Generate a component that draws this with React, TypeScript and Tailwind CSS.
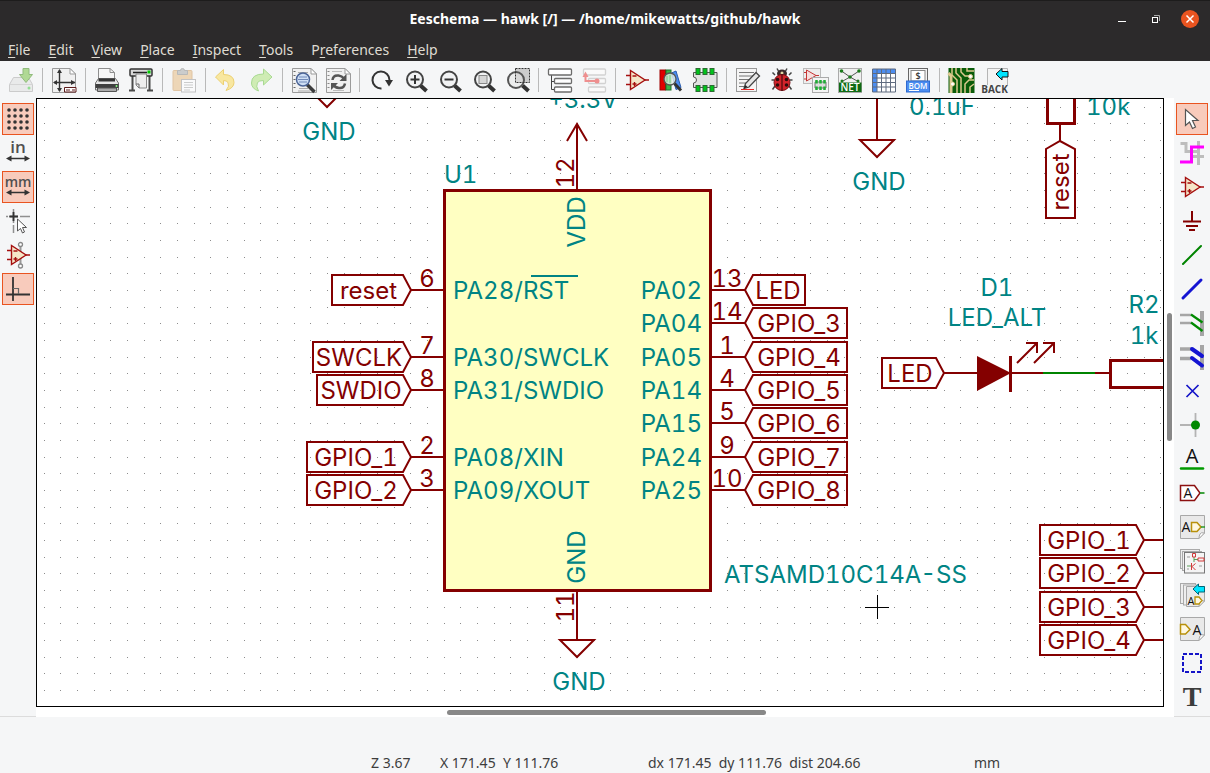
import type { ReactNode } from "react";

const MAROON = "#840000";
const TEAL = "#008484";

/* ---------- small icon building blocks ---------- */

const Page = ({ x = 0, y = 0, w = 24, h = 24, fold = 6 }: { x?: number; y?: number; w?: number; h?: number; fold?: number }) => (
  <g>
    <path
      d={`M${x + 0.5} ${y + 0.5}H${x + w - fold}L${x + w - 0.5} ${y + fold}V${y + h - 0.5}H${x + 0.5}Z`}
      fill="#f1f1f1"
      stroke="#9b9b9b"
    />
    <path d={`M${x + w - fold} ${y + 0.5}V${y + fold}H${x + w - 0.5}Z`} fill="#fff" stroke="#9b9b9b" />
  </g>
);

const CurledPage = ({ x = 0, y = 0, w = 25, h = 24 }: { x?: number; y?: number; w?: number; h?: number }) => (
  <g>
    <path
      d={`M${x + 0.5} ${y + 0.5}H${x + w - 0.5}V${y + h - 6}L${x + w - 6} ${y + h - 0.5}H${x + 0.5}Z`}
      fill="#e9e9e9"
      stroke="#a8a8a8"
    />
    <path d={`M${x + w - 0.5} ${y + h - 6}Q${x + w - 4} ${y + h - 7} ${x + w - 5} ${y + h - 5}T${x + w - 6} ${y + h - 0.5}Z`} fill="#fff" stroke="#a8a8a8" />
  </g>
);

const Magnifier = ({ children }: { children?: ReactNode }) => (
  <g transform="translate(2 1)">
    <path d="M15.5 16.5L21.5 22" stroke="#333" strokeWidth="4" />
    <circle cx="10" cy="10.5" r="8" fill="#f1f2f3" stroke="#444" strokeWidth="2" />
    {children}
  </g>
);

const OpAmp = () => (
  <g stroke="#a50f0f" strokeWidth="1.4">
    <path d="M1 7.5H6M1 16.5H6M19 12H24" />
    <path d="M5.5 2.5V21.5L20 12Z" fill="#f5e6c8" />
    <path d="M7.5 8H11.5M7.5 16H11.5M9.5 14V18" />
  </g>
);

const Chip = () => (
  <g>
    <path d="M0.5 4.5H24V19.5H0.5V15A3 3 0 0 0 0.5 9Z" fill="#e2e2e2" stroke="#555" />
    {[3, 10, 17].map((x) => (
      <g key={x} fill="#00c41a" stroke="#2d6b33">
        <rect x={x} y="0.5" width="4" height="6" />
        <rect x={x} y="17.5" width="4" height="6" />
      </g>
    ))}
  </g>
);

const iconText = { fontFamily: '"Open Sans", "Noto Sans", sans-serif' };

const icons: Record<string, ReactNode> = {
  save: (
    <g opacity="0.65">
      <path d="M4.5 9.5H19.5L23.5 16.5V23.5H0.5V16.5Z" fill="#e4e4e4" stroke="#b5b5b5" />
      <path d="M1 16.5H23" stroke="#c4c4c4" />
      <circle cx="20" cy="20" r="1.5" fill="#5fd35f" />
      <path d="M14 0.5H20V6.5H23.5L17 14.5L10.5 6.5H14Z" fill="#8ccb60" stroke="#5c9c3c" />
    </g>
  ),
  page: (
    <g>
      <Page h={25} />
      <path d="M7.5 2V23M2 14.5H23" stroke="#333" strokeWidth="1.4" />
      <path d="M5 5L7.5 1L10 5ZM5 20L7.5 24L10 20ZM5 12L1 14.5L5 17ZM19 12L23.5 14.5L19 17Z" fill="#333" />
      <path d="M12.5 19.5H24V24H12.5Z" fill="#fff" stroke="#5c1a1a" />
      <path d="M14 22H18M20 22H23" stroke="#5c1a1a" />
    </g>
  ),
  print: (
    <g>
      <path d="M3.5 13V0.5H15L19.5 4.5V13Z" fill="#f6f6f6" stroke="#8e8e8e" />
      <path d="M15 0.5V4.5H19.5" fill="none" stroke="#8e8e8e" />
      <path d="M3.5 10.5H20.5L23.5 15V22H0.5V15Z" fill="#e6e6e6" stroke="#707070" />
      <path d="M3.5 10.5H20V13.5H3.5Z" fill="#333" />
      <path d="M0.5 16H23.5V20H0.5Z" fill="#3f3f3f" />
      <path d="M2.5 20H21.5V23.5H2.5Z" fill="#aaa" stroke="#555" />
      <circle cx="21.5" cy="18" r="1" fill="#8f8" />
    </g>
  ),
  plot: (
    <g>
      <path d="M3.5 7V22M20.5 7V22M0 22.5H6M18 22.5H24" stroke="#4a4a4a" strokeWidth="2" />
      <rect x="1" y="1" width="22" height="7" rx="1" fill="#d8d8d8" stroke="#333" strokeWidth="1.5" />
      <path d="M4 4.5H18" stroke="#222" strokeWidth="1.5" />
      <rect x="18.5" y="2.5" width="3" height="3" fill="#0c0" />
      <path d="M7 6V17L10 20H17.5V6Z" fill="#ededed" stroke="#888" />
      <path d="M7 16H10V20" fill="none" stroke="#666" />
    </g>
  ),
  paste: (
    <g opacity="0.55">
      <rect x="1" y="2.5" width="19" height="20" rx="1" fill="#e8bd84" stroke="#cf9d60" />
      <path d="M5.5 6.5V2.5H8.5Q8.5 0.5 10.5 0.5T12.5 2.5H15.5V6.5Z" fill="#aaa" stroke="#888" />
      <rect x="9.5" y="11.5" width="14" height="12.5" fill="#fff" stroke="#999" />
      <path d="M12 14.5H21M12 17H21M12 19.5H21M12 22H18" stroke="#aaa" />
    </g>
  ),
  undo: (
    <path
      d="M8.5 1.5V6.5Q19 6.5 19 14.5Q19 20 11 22.5Q15 18 13 14.5Q11.5 12.5 8.5 12.5V17L0.5 9Z"
      fill="#f8e7a0"
      stroke="#ecd071"
    />
  ),
  redo: (
    <path
      d="M14.5 1V6Q2.5 6 2.5 15Q2.5 20.5 9.5 23Q6.5 18 8.5 14.5Q10 12.5 14.5 12.5V17L23 9Z"
      fill="#cfecb4"
      stroke="#a8da92"
    />
  ),
  find: (
    <g>
      <Page w={25} h={25} />
      <path d="M2.5 3V23" stroke="#666" strokeDasharray="1 3" strokeWidth="2" />
      <path d="M6 4.5H16M7 20.5H16M6 23H18" stroke="#aaa" />
      <path d="M15 16.5L22.5 24" stroke="#3c3c3c" strokeWidth="3.5" />
      <circle cx="11" cy="11.5" r="6.5" fill="#cfdff5" stroke="#4b6497" strokeWidth="1.5" />
      <path d="M7 9H15M6 11.5H16M7 14H15" stroke="#7189b8" />
    </g>
  ),
  replace: (
    <g>
      <Page w={25} h={25} />
      <path d="M2.5 3V23" stroke="#888" strokeDasharray="1 3" strokeWidth="2" />
      <path d="M6 3.5H16M7 22.5H18" stroke="#bbb" />
      <path d="M6.5 12Q7 7 12.5 7.5Q16 8 18 10.5M19 15.5Q18 20.5 13 20Q9 19.5 7.5 17" fill="none" stroke="#555" strokeWidth="2.5" />
      <path d="M20.5 6V13H13.5ZM5 22V15H12Z" fill="#555" />
    </g>
  ),
  refresh: (
    <g>
      <path d="M12.5 20.5A8.5 8.5 0 1 1 20.5 12" fill="none" stroke="#333" strokeWidth="2" />
      <path d="M16 12H24L20 18.5Z" fill="#333" />
    </g>
  ),
  zoomIn: (
    <Magnifier>
      <path d="M5.5 10.5H14.5M10 6V15" stroke="#333" strokeWidth="2" />
    </Magnifier>
  ),
  zoomOut: (
    <Magnifier>
      <path d="M5.5 10.5H14.5" stroke="#333" strokeWidth="2" />
    </Magnifier>
  ),
  zoomFit: (
    <Magnifier>
      <rect x="6" y="6.5" width="8" height="8" fill="#d6d6d6" stroke="#888" />
    </Magnifier>
  ),
  zoomArea: (
    <g transform="translate(2 0)">
      <rect x="8.5" y="0.5" width="14" height="14" fill="#ccc" />
      <path d="M15.5 17.5L21.5 23" stroke="#333" strokeWidth="4" />
      <circle cx="9" cy="12" r="8" fill="#e4e4e4" fillOpacity="0.5" stroke="#555" strokeWidth="2" />
      <rect x="8.5" y="0.5" width="14" height="14" fill="none" stroke="#333" strokeDasharray="2 1" />
    </g>
  ),
  hierarchy: (
    <g>
      <path d="M3.5 6V21.5H7M3.5 13.5H7" fill="none" stroke="#444" />
      <g fill="#fff" stroke="#6c6c6c" strokeWidth="1.3">
        <rect x="0.5" y="1" width="23" height="6" rx="1" />
        <rect x="6.5" y="10.5" width="17" height="5" rx="1" />
        <rect x="6.5" y="19" width="17" height="5" rx="1" />
      </g>
    </g>
  ),
  leaveSheet: (
    <g>
      <g fill="#fafafa" stroke="#d2d2d2" strokeWidth="1.3">
        <rect x="1.5" y="1" width="22" height="6" rx="1" />
        <rect x="6.5" y="10.5" width="17" height="5" rx="1" />
        <rect x="6.5" y="19" width="17" height="5" rx="1" />
      </g>
      <path d="M15 13H3.5V8" fill="none" stroke="#ee8f8f" strokeWidth="2" />
      <circle cx="15" cy="13" r="2.5" fill="#ee8f8f" />
      <path d="M0.5 9L3.5 3.5L6.5 9Z" fill="#ee8f8f" />
    </g>
  ),
  opamp: <OpAmp />,
  library: (
    <g>
      <rect x="1" y="2" width="5.5" height="20" fill="#e00000" stroke="#9f0000" />
      <rect x="7" y="2" width="5" height="20" fill="#39b54a" stroke="#20702c" />
      <path d="M12.5 5L17 3L22 19.5L17 21.5Z" fill="#4c8df0" stroke="#2a5cae" />
      <path d="M15.5 15.5L22 22.5" stroke="#333" strokeWidth="3" />
      <circle cx="11" cy="11" r="6" fill="#e4f0e8" fillOpacity="0.8" stroke="#555" strokeWidth="1.3" />
      <path d="M8 8V14M11 7V15" stroke="#8fd39a" strokeWidth="1.5" />
    </g>
  ),
  footprint: <Chip />,
  annotate: (
    <g>
      <rect x="0.5" y="0.5" width="20" height="23" fill="#f5f5f5" stroke="#999" />
      <path d="M3 4.5H18M3 8H17M3 11.5H14M3 15H11M3 18.5H8" stroke="#777" />
      <path d="M20 4.5L23.5 8L13 19L8 20.5L9.5 15.5Z" fill="#e6e6e6" stroke="#444" strokeWidth="1.3" />
      <path d="M8 20.5L9.5 17L11.5 19Z" fill="#222" />
      <path d="M5 21.5H18" stroke="#e22" />
    </g>
  ),
  bug: (
    <g>
      <path d="M5 7L2.5 4.5M19 7L21.5 4.5M4 12H1.5M20 12H22.5M5 18L2.5 21.5M19 18L21.5 21.5M9 4L7 0.5M15 4L17 0.5" stroke="#444" strokeWidth="1.5" fill="none" />
      <ellipse cx="12" cy="5.5" rx="5" ry="4" fill="#3a2a2a" />
      <circle cx="12" cy="5" r="1.5" fill="#e5d7a4" />
      <ellipse cx="12" cy="14.5" rx="8" ry="8" fill="#d2232a" stroke="#7d1115" />
      <path d="M12 6V23" stroke="#4a0a0c" strokeWidth="1.2" />
      <g fill="#2e0d0d">
        <circle cx="7.5" cy="11.5" r="1.8" />
        <circle cx="16.5" cy="11.5" r="1.8" />
        <circle cx="7.5" cy="17" r="1.8" />
        <circle cx="16.5" cy="17" r="1.8" />
      </g>
    </g>
  ),
  assign: (
    <g>
      <rect x="-0.5" y="0.5" width="17" height="15" fill="#eee" stroke="#bbb" />
      <path d="M2.5 2V13L12 7.5ZM0 4.5H2.5M0 11H2.5M12 7.5H15" fill="#f7dede" stroke="#c43535" />
      <rect x="8.5" y="9.5" width="16" height="15" fill="#f4f4f4" stroke="#aaa" />
      <path d="M11 14H22V20H11Z" fill="#ddd" stroke="#777" />
      <path d="M12.5 12V15.5M16.5 12V15.5M20.5 12V15.5M12.5 18.5V22M16.5 18.5V22M20.5 18.5V22" stroke="#1fae35" strokeWidth="2.5" />
    </g>
  ),
  netlist: (
    <g>
      <rect x="0.5" y="0.5" width="23" height="24" fill="#f0f0f0" stroke="#aaa" />
      <path d="M3.5 3L12 9L21 3M4 13.5L12 9L20 13.5" stroke="#555" fill="none" />
      <g fill="#1b7a1b">
        <circle cx="3.5" cy="3" r="1.8" />
        <circle cx="21" cy="3" r="1.8" />
        <circle cx="12" cy="9" r="1.8" />
        <circle cx="4" cy="13" r="1.5" />
        <circle cx="20" cy="13" r="1.5" />
      </g>
      <rect x="1" y="14.5" width="22.5" height="9.5" fill="#0f6b14" />
      <text x="12" y="23" textAnchor="middle" fontSize="10" fontWeight="600" fill="#fff" style={iconText}>NET</text>
    </g>
  ),
  table: (
    <g>
      <rect x="0.5" y="1" width="23" height="23" fill="#fff" />
      <path d="M0.5 1H23.5V5.5H0.5ZM0.5 5.5H5V24H0.5Z" fill="#4c8df0" />
      <path d="M0.5 1H23.5V24H0.5ZM0.5 5.5H23.5M0.5 10H23.5M0.5 14.5H23.5M0.5 19H23.5M5 1V24M9.5 1V24M14 1V24M18.5 1V24" fill="none" stroke="#5f6b7f" />
    </g>
  ),
  bom: (
    <g>
      <rect x="2.5" y="0.5" width="19" height="13" fill="#f4f4f4" stroke="#666" />
      <rect x="5" y="2.5" width="14" height="10.5" fill="#fff" stroke="#888" />
      <text x="12" y="11" textAnchor="middle" fontSize="9" fontWeight="600" fill="#333" style={iconText}>$</text>
      <rect x="0.5" y="13" width="23" height="11" fill="#4c8df0" stroke="#2d6ad0" />
      <text x="12" y="21" textAnchor="middle" fontSize="8" fontWeight="600" fill="#fff" style={iconText}>BOM</text>
      <path d="M3 22.5H13" stroke="#fff" />
    </g>
  ),
  pcb: (
    <g>
      <rect x="-0.5" y="0" width="26" height="25" fill="#0a5c0a" />
      <path d="M3 0V7L8 12V25M7 0V5L12 10V25M12 0V4L16 8H21M16 25V16L20 12H25M21 25V19L25 16M18 0V3H25" stroke="#dcc98f" strokeWidth="1.5" fill="none" />
      <path d="M-0.5 5L2 8V25" stroke="#dcc98f" strokeWidth="3" fill="none" />
      <circle cx="3.5" cy="16" r="2" fill="#fff" stroke="#dcc98f" />
      <circle cx="21.5" cy="8.5" r="2" fill="#fff" stroke="#dcc98f" />
    </g>
  ),
  back: (
    <g>
      <path d="M4.5 17V0.5H24.5V17" fill="#f4f4f4" stroke="#b5b5b5" />
      <path d="M13 6L19 0.5V3.5H25V9H19V12Z" fill="#00e5ff" stroke="#111" />
      <text x="11.5" y="25" textAnchor="middle" fontSize="10" fontWeight="700" fill="#444" style={iconText}>BACK</text>
    </g>
  ),
  grid: (
    <g fill="#333">
      {[3, 9, 15, 21].map((x) => [3, 9, 15, 21].map((y) => <circle key={`${x}-${y}`} cx={x} cy={y} r="1.8" />))}
    </g>
  ),
  inches: (
    <g>
      <text x="12" y="12" textAnchor="middle" fontSize="17" fontWeight="600" fill="#505050" style={iconText}>in</text>
      <path d="M3 17.5H21" stroke="#333" strokeWidth="1.5" />
      <path d="M0 17.5L5.5 14.5V20.5ZM24 17.5L18.5 14.5V20.5Z" fill="#333" />
    </g>
  ),
  millimetres: (
    <g>
      <text x="12" y="12" textAnchor="middle" fontSize="14" fontWeight="600" fill="#505050" style={iconText}>mm</text>
      <path d="M3 17.5H21" stroke="#333" strokeWidth="1.5" />
      <path d="M0 17.5L5.5 14.5V20.5ZM24 17.5L18.5 14.5V20.5Z" fill="#333" />
    </g>
  ),
  cursorShape: (
    <g>
      <path d="M0 7.5H2M3 7.5H12M14 7.5H24M7.5 0V14M7.5 16V24" stroke="#8f8f8f" strokeWidth="1.5" />
      <path d="M3.5 7.5H12M7.5 3V12" stroke="#333" strokeWidth="1.8" />
      <path d="M11.5 10V22L14.5 19.5L16.5 24L18.5 23L16.5 18.5H20.5Z" fill="#fff" stroke="#555" />
    </g>
  ),
  hiddenPins: (
    <g>
      <path d="M14.5 3V21" stroke="#999" strokeWidth="2" />
      <OpAmp />
      <circle cx="14.5" cy="1.5" r="2" fill="#fff" stroke="#888" strokeWidth="1.3" />
      <circle cx="14.5" cy="23" r="2" fill="#fff" stroke="#888" strokeWidth="1.3" />
    </g>
  ),
  orthogonal: (
    <g stroke="#333" fill="none">
      <path d="M0 17.5H24M7 0V24" strokeWidth="1.8" />
      <path d="M7 11.5H12.5V17" strokeWidth="1.2" stroke="#666" />
    </g>
  ),
  arrow: <path d="M5.5 2.5V18.5L9.5 15L12.5 21.5L15.5 20L12.5 13.5H18Z" fill="#fff" stroke="#555" strokeWidth="1.2" />,
  highlightNet: (
    <g fill="none">
      <path d="M0.5 2.5H6V10.5H17M18.5 0V24M12 15.5H24" stroke="#bdbdbd" strokeWidth="3" />
      <path d="M0 21H11.5V6H24" stroke="#f0f" strokeWidth="3" />
    </g>
  ),
  power: <path d="M12 2V12M3 12.5H21M6 17H18M9 21H15" stroke="#840000" strokeWidth="2" />,
  wire: <path d="M3 21L21 3" stroke="#008400" strokeWidth="2" strokeLinecap="round" />,
  bus: <path d="M3 21L21 3" stroke="#1414d2" strokeWidth="3" strokeLinecap="round" />,
  wireEntry: (
    <g>
      <path d="M0 4H11M0 12H11" stroke="#a6a6a6" strokeWidth="2.5" />
      <path d="M22 0V25" stroke="#a6a6a6" strokeWidth="4" />
      <path d="M11 3.5L22.5 11.5M11 11.5L22.5 20" stroke="#008a00" strokeWidth="2.2" />
    </g>
  ),
  busEntry: (
    <g>
      <path d="M0 4H11M0 13.5H11" stroke="#a6a6a6" strokeWidth="3.5" />
      <path d="M22 0V25" stroke="#a6a6a6" strokeWidth="4" />
      <path d="M12 4L22 11M12 13L22 20.5" stroke="#1414d2" strokeWidth="4" strokeLinecap="round" />
    </g>
  ),
  noConnect: <path d="M6.5 6L18.5 18M18.5 6L6.5 18" stroke="#1414c8" strokeWidth="1.7" />,
  junction: (
    <g>
      <path d="M0 12H12M15.5 0V24" stroke="#b4b4b4" strokeWidth="1.8" />
      <circle cx="15.5" cy="12" r="4.5" fill="#008a00" />
    </g>
  ),
  netLabel: (
    <g>
      <text x="12" y="16" textAnchor="middle" fontSize="20" fill="#111" style={iconText}>A</text>
      <path d="M1 21.5H23" stroke="#009a00" strokeWidth="2.5" strokeLinecap="round" />
    </g>
  ),
  globalLabel: (
    <g>
      <path d="M0.5 4.5H14.5L20 12L14.5 19.5H0.5Z" fill="#fff" stroke="#8c1010" strokeWidth="1.5" />
      <path d="M20 12H24.5" stroke="#2a9a2a" strokeWidth="1.8" />
      <text x="8" y="17" textAnchor="middle" fontSize="14" fill="#111" style={iconText}>A</text>
    </g>
  ),
  hierLabel: (
    <g>
      <CurledPage />
      <text x="6" y="17" textAnchor="middle" fontSize="14" fill="#111" style={iconText}>A</text>
      <path d="M11.5 7.5H17L21 12L17 16.5H11.5Z" fill="#fff8e0" stroke="#b8900a" strokeWidth="1.5" />
      <path d="M21 12H25" stroke="#2a9a2a" strokeWidth="1.5" />
    </g>
  ),
  sheet: (
    <g>
      <rect x="0.5" y="0.5" width="19" height="19" fill="#eee" stroke="#aaa" />
      <rect x="2.5" y="2.5" width="19" height="19" fill="#eee" stroke="#aaa" />
      <rect x="4.5" y="3.5" width="20" height="20.5" fill="#f4f4f4" stroke="#777" />
      <path d="M14 8V13M14 10.5H18M7 17H11" stroke="#5aa15a" fill="none" />
      <path d="M12.5 4.5H15.5V8H12.5ZM18 9H24V12H18ZM11.5 14V21M12 17.5L15.5 14.5M12 17.5L15.5 21" stroke="#d33b3b" fill="none" />
      <path d="M7 8H10M7 20H9M19 17H22" stroke="#999" />
    </g>
  ),
  importPin: (
    <g>
      <rect x="0.5" y="0.5" width="15" height="20" fill="#eee" stroke="#aaa" />
      <rect x="3.5" y="2" width="15" height="20" fill="#eee" stroke="#aaa" />
      <CurledPage x={6} y={3} w={19} h={21} />
      <path d="M13 6L18.5 1V3.5H24.5V9H18.5V11.5Z" fill="#00e5ff" stroke="#067" />
      <text x="11" y="21.5" textAnchor="middle" fontSize="11" fill="#111" style={iconText}>A</text>
      <path d="M15 14H19L22 17.5L19 21H15Z" fill="#fff8e0" stroke="#b8900a" strokeWidth="1.3" />
    </g>
  ),
  sheetPin: (
    <g>
      <CurledPage />
      <path d="M0.5 7.5H5.5L10 12.5L5.5 17H0.5Z" fill="#fff8e0" stroke="#b8900a" strokeWidth="1.5" />
      <text x="17" y="17.5" textAnchor="middle" fontSize="14" fill="#111" style={iconText}>A</text>
    </g>
  ),
  graphicLines: <rect x="3" y="3" width="18" height="18" fill="none" stroke="#1414c8" strokeWidth="2" strokeDasharray="4 2" />,
  text: (
    <text x="12" y="21" textAnchor="middle" fontSize="28" fontWeight="700" fill="#3c3c3c" style={{ fontFamily: '"Liberation Serif", serif' }}>T</text>
  ),
};

const Icon = ({ name }: { name: string }) => (
  <svg viewBox="0 0 24 24" className="size-6 overflow-visible" aria-hidden="true">
    {icons[name]}
  </svg>
);

/* ---------- toolbars ---------- */

const topTools: [string, string][][] = [
  [["save", "Save"]],
  [["page", "Page settings"]],
  [["print", "Print"], ["plot", "Plot"]],
  [["paste", "Paste"]],
  [["undo", "Undo"], ["redo", "Redo"]],
  [["find", "Find"], ["replace", "Find and replace"]],
  [["refresh", "Refresh"], ["zoomIn", "Zoom in"], ["zoomOut", "Zoom out"], ["zoomFit", "Zoom to fit"], ["zoomArea", "Zoom to selection"]],
  [["hierarchy", "Navigate hierarchy"], ["leaveSheet", "Leave sheet"]],
  [["opamp", "Symbol editor"], ["library", "Browse libraries"], ["footprint", "Footprint editor"]],
  [["annotate", "Annotate"], ["bug", "Electrical rules check"], ["assign", "Assign footprints"], ["netlist", "Generate netlist"], ["table", "Edit symbol fields"], ["bom", "Bill of materials"]],
  [["pcb", "Open board"], ["back", "Import footprint assignments"]],
];

const leftTools: [string, string, boolean][] = [
  ["grid", "Show grid", true],
  ["inches", "Inches", false],
  ["millimetres", "Millimetres", true],
  ["cursorShape", "Cursor shape", false],
  ["hiddenPins", "Show hidden pins", false],
  ["orthogonal", "Orthogonal wires", true],
];

const rightTools: [string, string, boolean][] = [
  ["arrow", "Select", true],
  ["highlightNet", "Highlight net", false],
  ["opamp", "Place symbol", false],
  ["power", "Place power port", false],
  ["wire", "Place wire", false],
  ["bus", "Place bus", false],
  ["wireEntry", "Wire to bus entry", false],
  ["busEntry", "Bus to bus entry", false],
  ["noConnect", "No connect flag", false],
  ["junction", "Place junction", false],
  ["netLabel", "Net label", false],
  ["globalLabel", "Global label", false],
  ["hierLabel", "Hierarchical label", false],
  ["sheet", "Hierarchical sheet", false],
  ["importPin", "Import sheet pin", false],
  ["sheetPin", "Sheet pin", false],
  ["graphicLines", "Graphic lines", false],
  ["text", "Text", false],
];

const SideBar = ({ tools, label }: { tools: [string, string, boolean][]; label: string }) => (
  <div role="toolbar" aria-label={label} className="flex w-9 shrink-0 flex-col items-center gap-0.5 border-b border-[#dcdcdc] bg-[#f5f6f7] pt-[5px]">
    {tools.map(([name, title, active]) => (
      <button
        key={name}
        type="button"
        aria-label={title}
        aria-pressed={active}
        className={
          active
            ? "flex size-8 shrink-0 items-center justify-center border border-[#e95420] bg-[#f8cbbc]"
            : "flex size-8 shrink-0 items-center justify-center"
        }
      >
        <Icon name={name} />
      </button>
    ))}
  </div>
);

/* ---------- schematic ---------- */

const gridPath = (() => {
  let d = "";
  const step = 50 / 3;
  for (let row = 0; row < 110; row++) {
    for (let col = -16; col < 200; col++) {
      d += `M${Math.floor(310.7 + col * step)} ${Math.floor(107.1 + row * step)}h1v1h-1z`;
    }
  }
  return d;
})();

type Anchor = "start" | "middle" | "end";

const T = ({ x, y, c = TEAL, a = "start", v = false, children }: { x: number; y: number; c?: string; a?: Anchor; v?: boolean; children: string }) => (
  <text x={x} y={y} fill={c} textAnchor={a} transform={v ? `rotate(-90 ${x} ${y})` : undefined}>
    {children}
  </text>
);

const LeftFlag = ({ x, tip, y, children }: { x: number; tip: number; y: number; children: string }) => (
  <g>
    <path d={`M${x} ${y - 15}H${tip - 8}L${tip} ${y}L${tip - 8} ${y + 15}H${x}Z`} />
    <T x={(x + tip - 6) / 2} y={y + 9} c={MAROON} a="middle">{children}</T>
  </g>
);

const RightFlag = ({ x, tip, y, children }: { x: number; tip: number; y: number; children: string }) => (
  <g>
    <path d={`M${x} ${y - 15}H${tip + 8}L${tip} ${y}L${tip + 8} ${y + 15}H${x}Z`} />
    <T x={(x + tip + 6) / 2} y={y + 9} c={MAROON} a="middle">{children}</T>
  </g>
);

const Ground = ({ x, y, from }: { x: number; y: number; from: number }) => (
  <g>
    <path d={`M${x} ${from}V${y}M${x - 17} ${y}H${x + 17}L${x} ${y + 17}Z`} />
    <T x={x + 2} y={y + 50} a="middle">GND</T>
  </g>
);

const leftPins: [number, string, string, string, number][] = [
  [290, "6", "PA28/RST", "reset", 332],
  [357, "7", "PA30/SWCLK", "SWCLK", 313],
  [390, "8", "PA31/SWDIO", "SWDIO", 317],
  [457, "2", "PA08/XIN", "GPIO_1", 307],
  [490, "3", "PA09/XOUT", "GPIO_2", 307],
];

const rightPins: [number, string, string, string, number][] = [
  [290, "13", "PA02", "LED", 805],
  [323, "14", "PA04", "GPIO_3", 847],
  [357, "1", "PA05", "GPIO_4", 847],
  [390, "4", "PA14", "GPIO_5", 847],
  [423, "5", "PA15", "GPIO_6", 847],
  [457, "9", "PA24", "GPIO_7", 847],
  [490, "10", "PA25", "GPIO_8", 847],
];

const sheetPorts: [number, string][] = [
  [540, "GPIO_1"],
  [573, "GPIO_2"],
  [607, "GPIO_3"],
  [640, "GPIO_4"],
];

const Schematic = () => (
  <svg className="absolute inset-0 size-full font-['Inter',sans-serif] text-2xl tabular-nums" role="img" aria-label="Schematic sheet">
    <g transform="translate(-37 -99)">
      <path d={gridPath} fill="#8c8c8c" shapeRendering="crispEdges" />
      <rect x="444.5" y="190.5" width="266" height="400" fill="#ffffc2" stroke={MAROON} strokeWidth="3" />
      <g fill="none" stroke={MAROON} strokeWidth="2" className="[&_text]:stroke-none">
        <T x={444} y={183}>U1</T>
        <T x={724} y={583}>ATSAMD10C14A-SS</T>

        {leftPins.map(([y, num, name, net, x]) => (
          <g key={num}>
            <path d={`M411 ${y}H443`} />
            <T x={427} y={y - 3} c={MAROON} a="middle">{num}</T>
            <T x={453} y={y + 9}>{name}</T>
            <LeftFlag x={x} tip={411} y={y}>{net}</LeftFlag>
          </g>
        ))}
        <path d="M531 276H578" stroke={TEAL} />

        {rightPins.map(([y, num, name, net, x]) => (
          <g key={num}>
            <path d={`M712 ${y}H745`} />
            <T x={727} y={y - 3} c={MAROON} a="middle">{num}</T>
            <T x={702} y={y + 9} a="end">{name}</T>
            <RightFlag x={x} tip={745} y={y}>{net}</RightFlag>
          </g>
        ))}

        <T x={583} y={108} a="middle">+3.3V</T>
        <path d="M577 189V124M567 141L577 124L587 141" />
        <T x={574} y={173} c={MAROON} a="middle" v>12</T>
        <T x={585} y={222} a="middle" v>VDD</T>
        <T x={585} y={557} a="middle" v>GND</T>
        <T x={574} y={607} c={MAROON} a="middle" v>11</T>
        <Ground x={577} y={640} from={592} />
        <Ground x={327} y={90} from={60} />
        <Ground x={877} y={140} from={60} />

        <T x={909} y={115}>0.1uF</T>
        <T x={1086} y={115}>10k</T>
        <rect x="1047.5" y="60.5" width="27" height="63" strokeWidth="3" />
        <path d="M1060 125V141M1046 218V149L1060 141L1075 149V218Z" />
        <T x={1069} y={182} c={MAROON} a="middle" v>reset</T>

        <T x={997} y={296} a="middle">D1</T>
        <T x={997} y={326} a="middle">LED_ALT</T>
        <T x={1144} y={313} a="middle">R2</T>
        <T x={1144} y={344} a="middle">1k</T>
        <LeftFlag x={882} tip={944} y={373}>LED</LeftFlag>
        <path d="M944 373H1110" />
        <path d="M1043 373H1095" stroke="#008400" />
        <path d="M977 356V391L1011 373Z" fill={MAROON} stroke="none" />
        <path d="M1010.5 356V392" strokeWidth="3" />
        <path d="M1017 363L1037 343M1026 343H1037V353M1034 363L1054 343M1043 343H1054V353" />
        <rect x="1110.5" y="360.5" width="100" height="27" strokeWidth="3" />

        {sheetPorts.map(([y, net]) => (
          <g key={net}>
            <LeftFlag x={1040} tip={1144} y={y}>{net}</LeftFlag>
            <path d={`M1144 ${y}H1200`} />
          </g>
        ))}
        <path d="M865 607.5H889M877.5 595V619" stroke="#000" strokeWidth="1" />
      </g>
    </g>
  </svg>
);

/* ---------- window ---------- */

const menus: [string, string, string][] = [
  ["", "F", "ile"],
  ["", "E", "dit"],
  ["", "V", "iew"],
  ["", "P", "lace"],
  ["", "I", "nspect"],
  ["", "T", "ools"],
  ["P", "r", "eferences"],
  ["", "H", "elp"],
];

export default function App() {
  return (
    <div className="flex h-screen flex-col overflow-hidden bg-[#f5f6f7] font-['Noto_Sans',sans-serif] text-sm text-[#3d3d3d]">
      <header className="shrink-0 bg-[#2c2a2b] text-[#dfdbd2]">
        <div className="grid h-[38px] grid-cols-[1fr_auto_1fr] items-center border-t border-[#1d1c1c] pb-0.5">
          <span />
          <h1 className="text-sm font-bold text-white">Eeschema — hawk [/] — /home/mikewatts/github/hawk</h1>
          <div className="flex items-center justify-end gap-4 pr-[11px]">
            <button type="button" aria-label="Minimize" className="flex size-[18px] items-center justify-center">
              <svg viewBox="0 0 18 18" className="size-[18px]"><path d="M5 11.5H13" stroke="#fff" /></svg>
            </button>
            <button type="button" aria-label="Restore" className="flex size-[18px] items-center justify-center">
              <svg viewBox="0 0 18 18" className="size-[18px]" fill="none">
                <path d="M7 5.5H12.5V11" stroke="#aaa" />
                <rect x="5.5" y="7.5" width="5" height="5" stroke="#fff" />
              </svg>
            </button>
            <button type="button" aria-label="Close" className="flex size-[18px] items-center justify-center rounded-full bg-[#e95420]">
              <svg viewBox="0 0 18 18" className="size-[18px]"><path d="M5.5 5.5L12.5 12.5M12.5 5.5L5.5 12.5" stroke="#fff" strokeWidth="1.5" /></svg>
            </button>
          </div>
        </div>
        <nav aria-label="Menu bar" className="flex h-[23px] items-center gap-0.5">
          {menus.map(([pre, key, post]) => (
            <button key={pre + key + post} type="button" className="px-2 leading-5">
              {pre}<span className="underline underline-offset-2">{key}</span>{post}
            </button>
          ))}
        </nav>
      </header>

      <div role="toolbar" aria-label="Main toolbar" className="flex h-[37px] shrink-0 items-center pl-1">
        {topTools.map((group, i) => (
          <div key={group[0][0]} className="flex items-center">
            {i > 0 && <div className="mx-1 h-6 w-px bg-[#b9b9b9]" />}
            {group.map(([name, title]) => (
              <button key={name} type="button" aria-label={title} className="flex h-8 w-[34px] items-center justify-center">
                <Icon name={name} />
              </button>
            ))}
          </div>
        ))}
      </div>

      <main className="flex min-h-0 flex-1">
        <SideBar tools={leftTools} label="Display options" />
        <div className="flex min-w-0 flex-1 flex-col">
          <div className="flex min-h-0 flex-1">
            <div className="relative min-w-0 flex-1 overflow-hidden border border-black bg-white">
              <Schematic />
            </div>
            <div className="flex w-2.5 flex-col items-center bg-white">
              <div className="grow-[215]" />
              <div className="w-[5px] grow-[128] rounded-full bg-[#888]" />
              <div className="grow-[266]" />
            </div>
          </div>
          <div className="flex h-2.5 shrink-0 items-center bg-white pr-2.5">
            <div className="grow-[411]" />
            <div className="h-[5px] grow-[319] rounded-full bg-[#888]" />
            <div className="grow-[398]" />
          </div>
        </div>
        <SideBar tools={rightTools} label="Drawing tools" />
      </main>

      <footer className="grid h-14 shrink-0 grid-cols-[371fr_69fr_208fr_326fr_236fr] items-end pb-0.5 text-sm leading-4 whitespace-pre">
        <span />
        <span>Z 3.67</span>
        <span>X 171.45  Y 111.76</span>
        <span>dx 171.45  dy 111.76  dist 204.66</span>
        <span>mm</span>
      </footer>
    </div>
  );
}
